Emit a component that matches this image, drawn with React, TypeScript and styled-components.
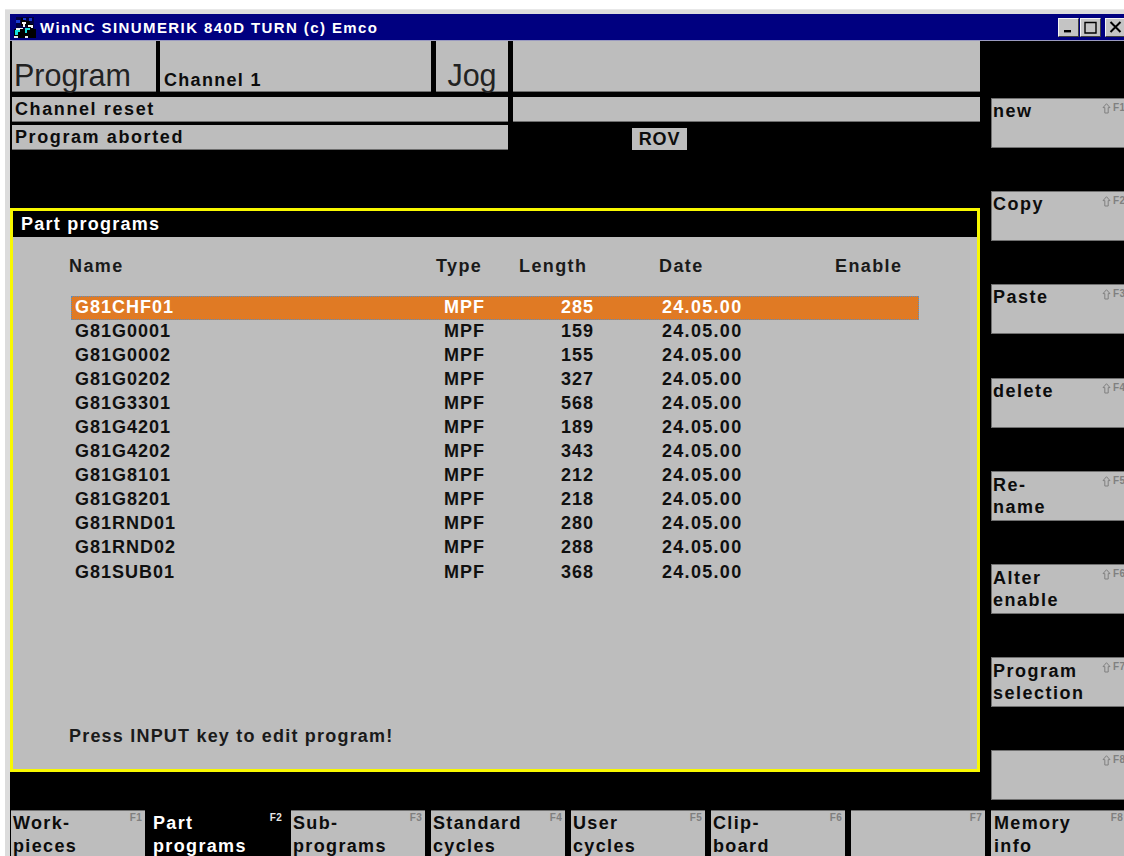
import React from 'react';
import styled, { createGlobalStyle } from 'styled-components';

const GlobalStyle = createGlobalStyle`
  html, body {
    margin: 0;
    padding: 0;
    background: #ffffff;
    overflow: hidden;
  }
  body {
    font-family: "Liberation Sans", Arial, sans-serif;
  }
`;

const Page = styled.div`
  width: 1124px;
  height: 856px;
  padding: 9px 0 0 5px;
  box-sizing: border-box;
  overflow: hidden;
  background: #ffffff;
`;

const Frame = styled.div`
  height: 847px;
  padding: 4px 0 0 5px;
  box-sizing: border-box;
  background: #dcdcdc;
  border-top: 1px solid #e8e8e8;
`;

const TitleBar = styled.div`
  display: flex;
  align-items: center;
  height: 27px;
  padding-left: 3px;
  background: #000080;
  border-bottom: 1px solid #9a9ac0;
  box-sizing: border-box;
`;

const TitleText = styled.span`
  margin-left: 3px;
  color: #ffffff;
  font-size: 15px;
  font-weight: 700;
  letter-spacing: 1.4px;
  white-space: nowrap;
`;

const WindowButtons = styled.div`
  display: flex;
  margin-left: auto;
  margin-right: -2px;
`;

const WindowButton = styled.div<{ $gap?: number }>`
  display: flex;
  align-items: center;
  justify-content: center;
  width: 21px;
  height: 19px;
  margin-left: ${p => p.$gap ?? 1}px;
  box-sizing: border-box;
  background: #c4c4c4;
  border: 1px solid;
  border-color: #f4f4f4 #404040 #404040 #f4f4f4;
`;

const Client = styled.div`
  height: 815px;
  background: #000000;
  overflow: hidden;
`;

const MainArea = styled.div`
  display: flex;
  height: 769px;
`;

const LeftColumn = styled.div`
  width: 970px;
  flex: none;
`;

const HeaderRow = styled.div`
  display: grid;
  grid-template-columns: 144px 271px 73px 468px;
  column-gap: 4px;
  height: 51px;
  margin-left: 2px;
`;

const Cell = styled.div`
  display: flex;
  align-items: flex-end;
  background: #bdbdbd;
  border-bottom: 1px solid #6e6e6e;
  box-sizing: border-box;
  color: #0c0c0c;
  white-space: nowrap;
`;

const BigCell = styled(Cell)`
  padding-left: 2px;
  font-size: 30.5px;
  line-height: 32px;
  color: #222222;
`;

const JogCell = styled(BigCell)`
  justify-content: center;
  margin-left: 1px;
  padding-left: 0;
`;

const ModeFiller = styled(Cell)`
  margin-left: 1px;
`;

const ChannelCell = styled(Cell)`
  padding-left: 4px;
  font-size: 18px;
  font-weight: 700;
  letter-spacing: 1.3px;
  line-height: 22px;
`;

const StatusRow = styled.div`
  display: grid;
  grid-template-columns: 496px 467px;
  column-gap: 5px;
  height: 25px;
  margin-left: 2px;
`;

const FirstStatusRow = styled(StatusRow)`
  margin-top: 5px;
`;

const SecondStatusRow = styled(StatusRow)`
  margin-top: 3px;
`;

const StatusCell = styled(Cell)`
  align-items: center;
  padding-left: 3px;
  font-size: 18px;
  font-weight: 700;
  letter-spacing: 1.6px;
`;

const RovSlot = styled.div`
  display: flex;
  align-items: flex-end;
  padding-left: 119px;
`;

const RovBadge = styled.div`
  display: flex;
  align-items: center;
  justify-content: center;
  width: 55px;
  height: 22px;
  background: #bdbdbd;
  font-size: 18px;
  font-weight: 700;
  letter-spacing: 0.8px;
  color: #0c0c0c;
`;

const Panel = styled.section`
  display: flex;
  flex-direction: column;
  height: 564px;
  margin-top: 58px;
  box-sizing: border-box;
  border: 3px solid #f8f800;
  background: #bdbdbd;
`;

const PanelTitle = styled.div`
  display: flex;
  align-items: center;
  height: 26px;
  flex: none;
  padding-left: 8px;
  background: #000000;
  color: #ffffff;
  font-size: 18px;
  font-weight: 700;
  letter-spacing: 1.25px;
`;

const ColumnHeads = styled.div`
  display: grid;
  grid-template-columns: 367px 83px 140px 176px 100px;
  margin: 17px 0 0 56px;
  height: 24px;
  align-items: center;
  font-size: 18px;
  font-weight: 700;
  letter-spacing: 1.4px;
  color: #1a1a1a;
`;

const ProgramList = styled.div`
  margin: 18px 0 0 58px;
  width: 848px;
`;

const ProgramRow = styled.div<{ $selected?: boolean }>`
  display: grid;
  grid-template-columns: 369px 72px 78px 1fr;
  height: 24.1px;
  align-items: center;
  box-sizing: border-box;
  padding: 0 0 2px 4px;
  font-size: 18px;
  font-weight: 700;
  letter-spacing: 1px;
  color: ${p => (p.$selected ? '#ffffff' : '#101010')};
  background: ${p => (p.$selected ? '#e07a24' : 'transparent')};
  outline: ${p => (p.$selected ? '1px dotted #5b8fc4' : 'none')};
  outline-offset: -1px;
`;

const LengthCell = styled.span`
  text-align: right;
`;

const DateCell = styled.span`
  padding-left: 68px;
  letter-spacing: 1.3px;
`;

const PanelHint = styled.div`
  margin: auto 0 22px 56px;
  font-size: 18px;
  font-weight: 700;
  letter-spacing: 1.2px;
  color: #1a1a1a;
`;

const SideKeys = styled.div`
  display: flex;
  flex-direction: column;
  gap: 43.2px;
  width: 140px;
  flex: none;
  margin-left: 11px;
  padding-top: 57px;
`;

const SideKey = styled.div<{ $double?: boolean }>`
  position: relative;
  height: 50px;
  padding: ${p => (p.$double ? 2 : 1)}px 0 0 1px;
  box-sizing: border-box;
  background: #bdbdbd;
  border: 1px solid #707070;
  border-right: none;
  font-size: 18px;
  font-weight: 700;
  line-height: ${p => (p.$double ? 22 : 23)}px;
  letter-spacing: 1.5px;
  color: #0c0c0c;
`;

const ShiftHint = styled.span`
  position: absolute;
  top: 4px;
  left: 110px;
  display: flex;
  align-items: flex-start;
  gap: 2px;
  font-size: 10px;
  line-height: 10px;
  font-weight: 700;
  letter-spacing: 0.4px;
  color: #808080;
`;

const BottomKeys = styled.div`
  display: flex;
  gap: 6px;
  padding-left: 1px;
  height: 46px;
`;

const BottomKey = styled.div<{ $active?: boolean; $last?: boolean }>`
  position: relative;
  width: ${p => (p.$last ? 133 : 134)}px;
  flex: none;
  padding: 1px 0 0 ${p => (p.$last ? 3 : 2)}px;
  box-sizing: border-box;
  background: ${p => (p.$active ? '#000000' : '#bdbdbd')};
  color: ${p => (p.$active ? '#ffffff' : '#0c0c0c')};
  border-top: 1px solid ${p => (p.$active ? '#000000' : '#707070')};
  font-size: 18px;
  font-weight: 700;
  line-height: 23px;
  letter-spacing: 1.35px;
`;

const FunctionTag = styled.span<{ $active?: boolean; $last?: boolean }>`
  position: absolute;
  top: 1px;
  right: ${p => (p.$last ? 1 : 3)}px;
  font-size: 10px;
  line-height: 11px;
  font-weight: 700;
  letter-spacing: 0.3px;
  color: ${p => (p.$active ? '#e8e8e8' : '#808080')};
`;

// small tree of machine nodes shown left of the window title
const AppIcon = () => (
  <svg width="24" height="24" viewBox="0 0 24 24">
    <rect x="3" y="2" width="18" height="21" fill="#000040" />
    <rect x="1" y="14" width="22" height="9" fill="#000000" />
    <path d="M8 3h4v3h5v3h3v5h-6v-3H8z" fill="#000000" />
    <path d="M10 3h3v2h-3zM3 5h4v3H3zM16 3h3v3h-3z" fill="#1838d0" />
    <path d="M9 7h4v2h-1v3h-2V9H9z" fill="#f4f4f4" />
    <path d="M2 15h5v2H5v3H2z" fill="#18e0e0" />
    <path d="M12 13h5v2h-3v3h-2z" fill="#18e0e0" />
    <path d="M3 13h7v1H7v1H3zM15 10h5v3h-2v-1h-3z" fill="#f4f4f4" />
    <path d="M1 21h4v2H1zM12 21h3v2h-3z" fill="#e8e8e8" />
  </svg>
);

const ShiftArrow = () => (
  <svg width="9" height="11" viewBox="0 0 9 11">
    <path d="M4.5 .7 8 4.6H6.2V10H2.8V4.6H1z" fill="none" stroke="#808080" strokeWidth="1" />
  </svg>
);

const programs = [
  ['G81CHF01', '285'],
  ['G81G0001', '159'],
  ['G81G0002', '155'],
  ['G81G0202', '327'],
  ['G81G3301', '568'],
  ['G81G4201', '189'],
  ['G81G4202', '343'],
  ['G81G8101', '212'],
  ['G81G8201', '218'],
  ['G81RND01', '280'],
  ['G81RND02', '288'],
  ['G81SUB01', '368'],
];

const sideKeys = [
  ['new'],
  ['Copy'],
  ['Paste'],
  ['delete'],
  ['Re-', 'name'],
  ['Alter', 'enable'],
  ['Program', 'selection'],
  [],
];

const bottomKeys = [
  ['Work-', 'pieces'],
  ['Part', 'programs'],
  ['Sub-', 'programs'],
  ['Standard', 'cycles'],
  ['User', 'cycles'],
  ['Clip-', 'board'],
  [],
  ['Memory', 'info'],
];

const App: React.FC = () => {
  return (
    <Page>
      <GlobalStyle />
      <Frame>
        <TitleBar>
          <AppIcon />
          <TitleText>WinNC SINUMERIK 840D TURN (c) Emco</TitleText>
          <WindowButtons>
            <WindowButton>
              <svg width="11" height="11" viewBox="0 0 11 11">
                <rect x="1" y="8" width="7" height="2.4" fill="#000" />
              </svg>
            </WindowButton>
            <WindowButton>
              <svg width="13" height="13" viewBox="0 0 13 13">
                <path d="M1 1.5h11v10.5H1z" fill="none" stroke="#000" strokeWidth="1.4" />
              </svg>
            </WindowButton>
            <WindowButton $gap={4}>
              <svg width="13" height="12" viewBox="0 0 13 12">
                <path d="M1.5 1 11.5 11M11.5 1 1.5 11" stroke="#000" strokeWidth="2" />
              </svg>
            </WindowButton>
          </WindowButtons>
        </TitleBar>
        <Client>
          <MainArea>
            <LeftColumn>
              <HeaderRow>
                <BigCell>Program</BigCell>
                <ChannelCell>Channel 1</ChannelCell>
                <JogCell>Jog</JogCell>
                <ModeFiller />
              </HeaderRow>
              <FirstStatusRow>
                <StatusCell>Channel reset</StatusCell>
                <Cell />
              </FirstStatusRow>
              <SecondStatusRow>
                <StatusCell>Program aborted</StatusCell>
                <RovSlot>
                  <RovBadge>ROV</RovBadge>
                </RovSlot>
              </SecondStatusRow>
              <Panel>
                <PanelTitle>Part programs</PanelTitle>
                <ColumnHeads>
                  <span>Name</span>
                  <span>Type</span>
                  <span>Length</span>
                  <span>Date</span>
                  <span>Enable</span>
                </ColumnHeads>
                <ProgramList>
                  {programs.map(([name, length], i) => (
                    <ProgramRow key={name} $selected={i === 0}>
                      <span>{name}</span>
                      <span>MPF</span>
                      <LengthCell>{length}</LengthCell>
                      <DateCell>24.05.00</DateCell>
                    </ProgramRow>
                  ))}
                </ProgramList>
                <PanelHint>Press INPUT key to edit program!</PanelHint>
              </Panel>
            </LeftColumn>
            <SideKeys>
              {sideKeys.map((lines, i) => (
                <SideKey key={i} $double={lines.length > 1}>
                  {lines.map(line => (
                    <div key={line}>{line}</div>
                  ))}
                  <ShiftHint>
                    <ShiftArrow />
                    F{i + 1}
                  </ShiftHint>
                </SideKey>
              ))}
            </SideKeys>
          </MainArea>
          <BottomKeys>
            {bottomKeys.map((lines, i) => (
              <BottomKey key={i} $active={i === 1} $last={i === 7}>
                {lines.map(line => (
                  <div key={line}>{line}</div>
                ))}
                <FunctionTag $active={i === 1} $last={i === 7}>F{i + 1}</FunctionTag>
              </BottomKey>
            ))}
          </BottomKeys>
        </Client>
      </Frame>
    </Page>
  );
};

export default App;
